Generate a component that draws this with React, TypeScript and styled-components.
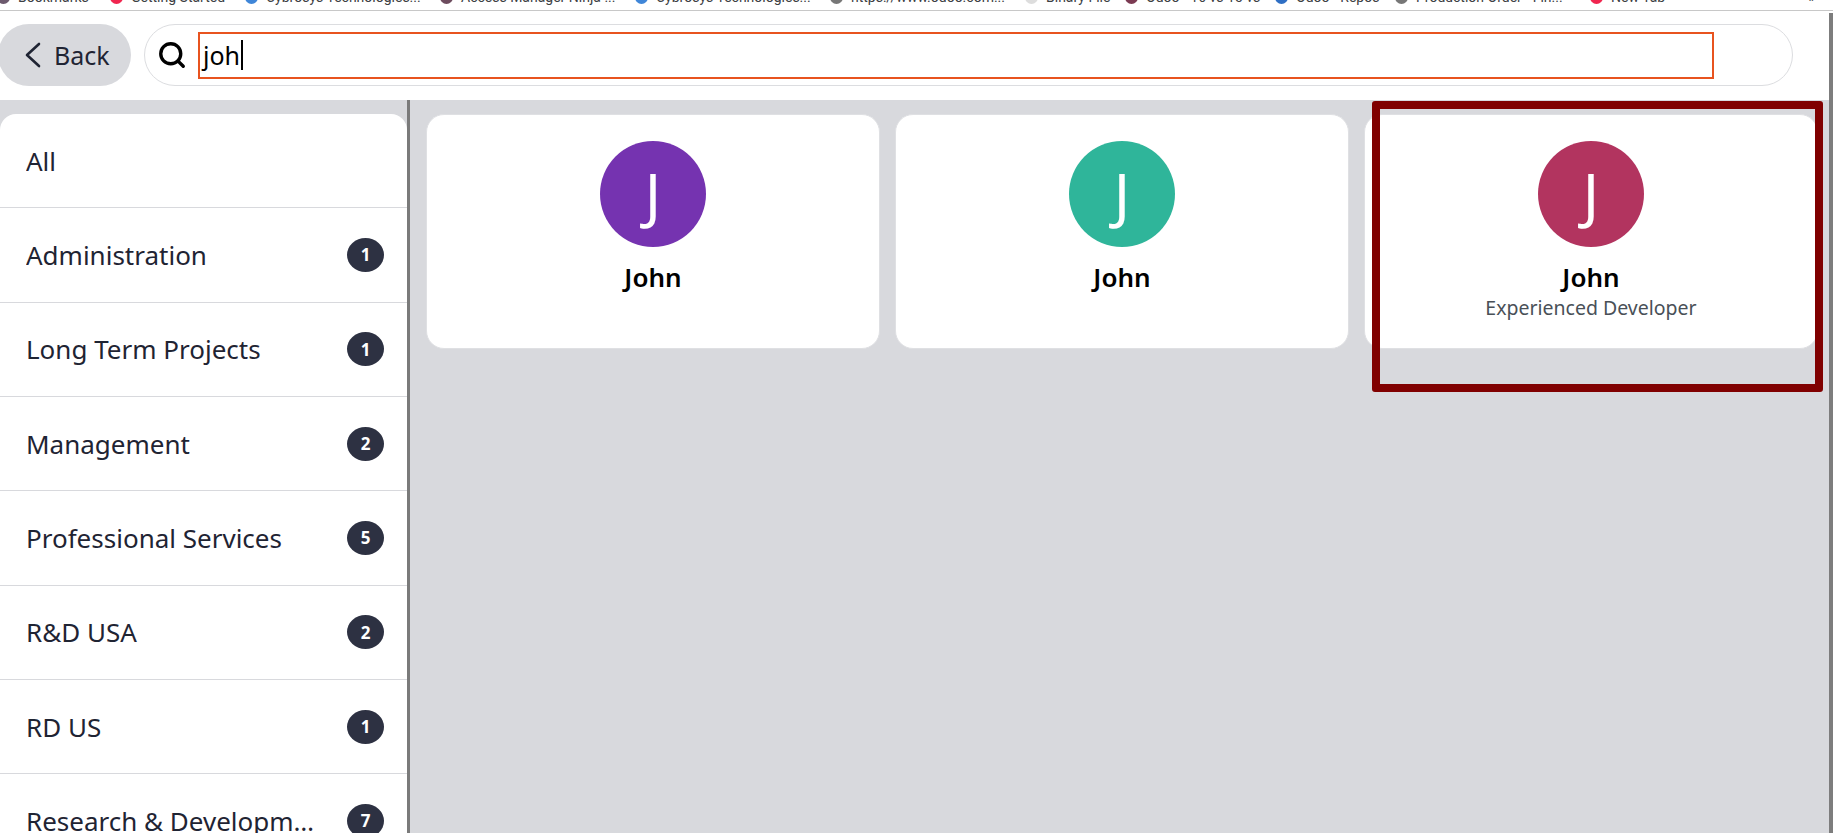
import styled, { createGlobalStyle } from "styled-components";
import { Search } from "lucide-react";

const GlobalStyle = createGlobalStyle`
  html, body {
    margin: 0;
    height: 100%;
    overflow: hidden;
    background: #ffffff;
  }

  body {
    font-family: "Noto Sans", "Open Sans", sans-serif;
    color: #1f2433;
  }

  * {
    box-sizing: border-box;
  }
`;

const Page = styled.div`
  display: flex;
  flex-direction: column;
  height: 833px;
  overflow: hidden;
`;

const BookmarkBar = styled.div`
  flex: none;
  height: 11px;
  overflow: hidden;
  border-bottom: 1px solid #c8c8c8;
`;

const BookmarkTrack = styled.div`
  display: flex;
  align-items: center;
  height: 20px;
  margin: -13px 0 0 -3px;
`;

const Bookmark = styled.div<{ $width: number }>`
  display: flex;
  flex: none;
  align-items: center;
  gap: 8px;
  width: ${(p) => p.$width}px;
  font-family: "Roboto", sans-serif;
  font-size: 14px;
  color: #3c4043;
  white-space: nowrap;
  overflow: hidden;
`;

const Favicon = styled.span<{ $color: string }>`
  flex: none;
  width: 13px;
  height: 13px;
  border-radius: 50%;
  background: ${(p) => p.$color};
`;

const MoreBookmarks = styled.div`
  margin-left: auto;
  margin-right: 18px;
  font-family: "Roboto", sans-serif;
  font-size: 14px;
  color: #3c4043;
`;

const Body = styled.div`
  display: flex;
  flex: 1;
  min-height: 0;
`;

const Main = styled.div`
  display: flex;
  flex: 1;
  flex-direction: column;
  min-width: 0;
`;

const EdgeBar = styled.div`
  flex: none;
  width: 4px;
  margin-top: 2px;
  background: #7d7d7d;
`;

const Toolbar = styled.div`
  display: flex;
  flex: none;
  align-items: center;
  gap: 13px;
  height: 89px;
  padding: 0 36px 1px 0;
  background: #ffffff;
`;

const BackButton = styled.button`
  display: flex;
  flex: none;
  align-items: center;
  gap: 13px;
  width: 133px;
  height: 62px;
  margin-left: -2px;
  padding: 0 0 0 26px;
  border: 0;
  border-radius: 31px;
  background: #d8d9dd;
  font: inherit;
  font-size: 25px;
  color: #1f2433;
`;

const BackChevron = styled.svg`
  flex: none;
  width: 17px;
  height: 26px;
  fill: none;
  stroke: #1f2433;
  stroke-width: 2.6;
  stroke-linecap: round;
  stroke-linejoin: round;
`;

const SearchPill = styled.div`
  display: flex;
  flex: 1;
  align-items: center;
  height: 62px;
  padding: 0 78px 0 12px;
  border: 1px solid #dcdde0;
  border-radius: 31px;
  background: #ffffff;
  color: #000000;
`;

const SearchField = styled.div`
  display: flex;
  flex: 1;
  align-items: center;
  height: 47px;
  margin-left: 11px;
  padding-left: 3px;
  border: 2px solid #e8531f;
  font-size: 25px;
  color: #000000;
`;

const Caret = styled.span`
  width: 2px;
  height: 30px;
  margin-left: 1px;
  background: #000000;
`;

const Content = styled.div`
  display: flex;
  flex: 1;
  min-height: 0;
  background: #d8d9dd;
`;

const Sidebar = styled.aside`
  flex: none;
  width: 410px;
  padding-top: 14px;
  border-right: 3px solid #7a7a7a;
  overflow: hidden;
`;

const CategoryList = styled.div`
  border-radius: 16px 16px 0 0;
  background: #ffffff;
`;

const CategoryRow = styled.div`
  display: flex;
  align-items: center;
  justify-content: space-between;
  height: 94.33px;
  padding: 0 23px 0 26px;
  border-bottom: 1px solid #d8d9dd;
  font-size: 26px;
`;

const CategoryName = styled.span`
  flex: 0 1 292px;
  overflow: hidden;
  white-space: nowrap;
  text-overflow: ellipsis;
`;

const CountBadge = styled.span`
  display: flex;
  flex: none;
  align-items: center;
  justify-content: center;
  width: 37px;
  height: 34px;
  border-radius: 50%;
  background: #2d3142;
  font-size: 17px;
  font-weight: 700;
  color: #ffffff;
`;

const Results = styled.div`
  position: relative;
  flex: 1;
  display: grid;
  grid-template-columns: repeat(3, 454px);
  grid-auto-rows: 235px;
  gap: 15px;
  padding: 14px 15px 14px 16px;
`;

const ResultCard = styled.div`
  display: flex;
  flex-direction: column;
  align-items: center;
  padding-top: 26px;
  border: 1px solid #dfe0e3;
  border-radius: 18px;
  background: #ffffff;
`;

const Avatar = styled.div<{ $color: string }>`
  display: flex;
  align-items: center;
  justify-content: center;
  width: 106px;
  height: 106px;
  border-radius: 50%;
  background: ${(p) => p.$color};
  font-size: 60px;
  font-weight: 400;
  line-height: 1;
  color: #ffffff;
`;

const PersonName = styled.div`
  margin-top: 12px;
  font-size: 26px;
  font-weight: 600;
  line-height: 36px;
  color: #000000;
`;

const PersonRole = styled.div`
  margin-top: -1px;
  font-size: 19.5px;
  line-height: 28px;
  color: #495057;
`;

// Red annotation drawn over the third card in the screenshot
const Highlight = styled.div`
  position: absolute;
  top: 1px;
  left: 962px;
  width: 451px;
  height: 291px;
  border: 8px solid #800000;
  border-radius: 3px;
  pointer-events: none;
`;

const bookmarks = [
  { label: "Bookmarks", color: "#6d5a6e", width: 113 },
  { label: "Getting Started", color: "#f0264f", width: 135 },
  { label: "Cybrosys Technologies...", color: "#3f86d8", width: 195 },
  { label: "Access Manager Ninja ...", color: "#6d4c5e", width: 195 },
  { label: "Cybrosys Technologies...", color: "#3f86d8", width: 195 },
  { label: "https://www.odoo.com...", color: "#777777", width: 195 },
  { label: "Binary File", color: "#dddddd", width: 100 },
  { label: "Odoo - 16 vs 15 vs", color: "#7b3a52", width: 150 },
  { label: "Odoo - Repos", color: "#2f6fc4", width: 120 },
  { label: "Production Order - Fin...", color: "#777777", width: 195 },
  { label: "New Tab", color: "#f0264f", width: 90 },
];

const categories = [
  { name: "All" },
  { name: "Administration", count: 1 },
  { name: "Long Term Projects", count: 1 },
  { name: "Management", count: 2 },
  { name: "Professional Services", count: 5 },
  { name: "R&D USA", count: 2 },
  { name: "RD US", count: 1 },
  { name: "Research & Development", count: 7 },
];

const people = [
  { name: "John", color: "#7533b0" },
  { name: "John", color: "#2fb59a" },
  { name: "John", color: "#b2345f", role: "Experienced Developer" },
];

export default function App() {
  return (
    <Page>
      <GlobalStyle />
      <BookmarkBar>
        <BookmarkTrack>
          {bookmarks.map((b) => (
            <Bookmark key={b.label + b.width + b.color} $width={b.width}>
              <Favicon $color={b.color} />
              {b.label}
            </Bookmark>
          ))}
          <MoreBookmarks>»</MoreBookmarks>
        </BookmarkTrack>
      </BookmarkBar>
      <Body>
        <Main>
          <Toolbar>
            <BackButton>
              <BackChevron viewBox="0 0 17 26">
                <path d="M15 2 L3 13 L15 24" />
              </BackChevron>
              Back
            </BackButton>
            <SearchPill>
              <Search size={30} strokeWidth={2.7} />
              <SearchField>
                joh
                <Caret />
              </SearchField>
            </SearchPill>
          </Toolbar>
          <Content>
            <Sidebar>
              <CategoryList>
                {categories.map((c) => (
                  <CategoryRow key={c.name}>
                    <CategoryName>{c.name}</CategoryName>
                    {c.count && <CountBadge>{c.count}</CountBadge>}
                  </CategoryRow>
                ))}
              </CategoryList>
            </Sidebar>
            <Results>
              {people.map((p) => (
                <ResultCard key={p.color}>
                  <Avatar $color={p.color}>J</Avatar>
                  <PersonName>{p.name}</PersonName>
                  {p.role && <PersonRole>{p.role}</PersonRole>}
                </ResultCard>
              ))}
              <Highlight />
            </Results>
          </Content>
        </Main>
        <EdgeBar />
      </Body>
    </Page>
  );
}
